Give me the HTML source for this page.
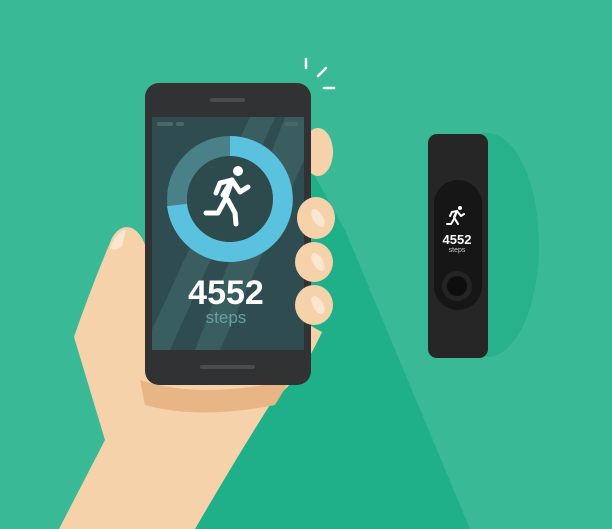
<!DOCTYPE html><html><head><style>body{margin:0}svg{display:block}</style></head><body>
<svg width="612" height="529" viewBox="0 0 612 529" xmlns="http://www.w3.org/2000/svg" font-family="Liberation Sans, sans-serif">
<rect width="612" height="529" fill="#39b995"/>
<polygon points="300,150 345,230 470,529 190,529 240,380" fill="#1fb089"/>
<ellipse cx="487" cy="245" rx="52" ry="112" fill="#27b28b"/>
<g stroke="#fff" stroke-width="2.5" stroke-linecap="round"><line x1="306" y1="59" x2="306" y2="68"/><line x1="318" y1="76" x2="326" y2="68"/><line x1="324" y1="88" x2="334" y2="88"/></g>
<path d="M59,529 L105,440 L74,337 Q90,290 112,238 Q120,224 132,228 Q146,236 148,260 L150,330 L300,320 L322,332 Q300,380 273,400 Q235,460 195,529 Z" fill="#f6d2ab"/>
<path d="M126,229 Q116,232 110,248 Q116,252 122,246 Z" fill="#fbe6cf"/>
<path d="M140,380 Q200,400 290,380 L275,405 Q200,420 145,405 Z" fill="#e8b585"/>
<ellipse cx="318" cy="152" rx="15" ry="24" fill="#f6d2ab"/>
<rect x="145" y="83" width="166" height="302" rx="14" fill="#303233"/>
<rect x="152" y="117" width="152" height="233" fill="#2f4d50"/>
<polygon points="250,117 275,117 170,350 152,350 152,330" fill="#3a5d60"/>
<polygon points="285,117 304,117 304,160 220,350 195,350" fill="#3a5d60"/>
<rect x="210" y="98" width="35" height="4" rx="2" fill="#4a4c4d"/>
<rect x="200" y="365" width="55" height="4" rx="2" fill="#4a4c4d"/>
<rect x="157" y="122" width="16" height="4" rx="2" fill="#4a6769"/><rect x="176" y="122" width="8" height="4" rx="2" fill="#4a6769"/><rect x="284" y="122" width="14" height="4" rx="2" fill="#4a6769"/>
<circle cx="230" cy="199" r="53" fill="none" stroke="#4a8088" stroke-width="20"/>
<path d="M230,146 A53,53 0 1 1 177,205" fill="none" stroke="#5ac2df" stroke-width="20"/>
<circle cx="230" cy="199" r="43" fill="#2d4a4d"/>
<g fill="none" stroke="#fff" stroke-width="5" stroke-linecap="round" stroke-linejoin="round"><path d="M223,195 L232,180 L240,192 L248,187"/><path d="M232,180 L220,183 L216,193"/><path d="M228,200 L235,213 L236,224"/><path d="M225,200 L218,213 L206,213"/><path d="M232,180 L225,200"/></g>
<circle cx="238" cy="171" r="5" fill="#fff"/>
<text x="226" y="304" text-anchor="middle" font-size="34" font-weight="bold" fill="#fff">4552</text>
<text x="226" y="323" text-anchor="middle" font-size="17" fill="#6b9ea1">steps</text>
<ellipse cx="316" cy="218" rx="19" ry="21" fill="#f6d2ab"/><ellipse cx="318" cy="218" rx="5" ry="10" fill="#fbe6cf" transform="rotate(-30 318 218)"/>
<ellipse cx="314" cy="262" rx="19" ry="20" fill="#f6d2ab"/><ellipse cx="318" cy="262" rx="5" ry="10" fill="#fbe6cf" transform="rotate(-30 318 262)"/>
<ellipse cx="314" cy="305" rx="19" ry="20" fill="#f6d2ab"/><ellipse cx="318" cy="305" rx="5" ry="10" fill="#fbe6cf" transform="rotate(-30 318 305)"/>
<rect x="428" y="134" width="60" height="224" rx="9" fill="#262626"/>
<rect x="434" y="180" width="48" height="130" rx="24" fill="#161616"/>
<circle cx="457" cy="286" r="15" fill="#242424"/><circle cx="457" cy="286" r="10" fill="#0e0e0e"/>
<g fill="none" stroke="#fff" stroke-width="2" stroke-linecap="round" stroke-linejoin="round"><path d="M454,217 L457,211 L461,216 L464,214"/><path d="M457,211 L452,212 L450,216"/><path d="M455,219 L458,224"/><path d="M454,219 L451,224 L447,224"/><path d="M457,211 L454,219"/></g>
<circle cx="460" cy="208" r="2" fill="#fff"/>
<text x="457" y="244" text-anchor="middle" font-size="13" font-weight="bold" fill="#fff">4552</text>
<text x="457" y="252" text-anchor="middle" font-size="7" fill="#ccc">steps</text>
</svg></body></html>
